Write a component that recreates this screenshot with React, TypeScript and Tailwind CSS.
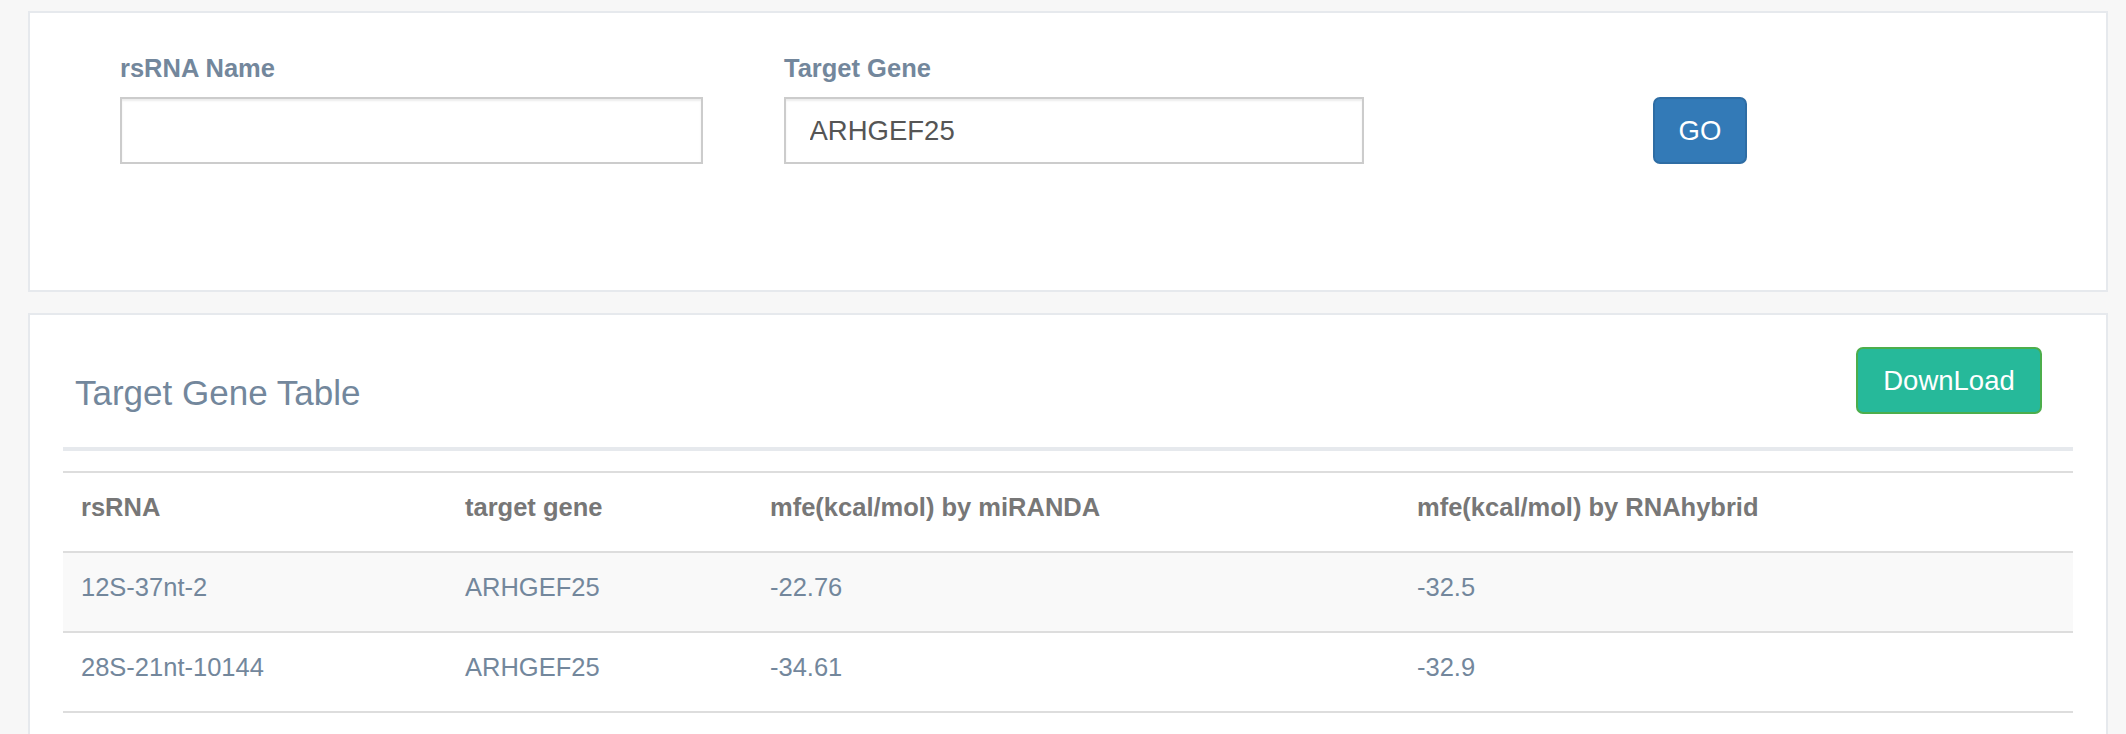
import React from "react";

const rows = [
  { rs: "12S-37nt-2", gene: "ARHGEF25", miranda: "-22.76", hybrid: "-32.5" },
  { rs: "28S-21nt-10144", gene: "ARHGEF25", miranda: "-34.61", hybrid: "-32.9" },
];

const font = { fontFamily: '"Liberation Sans", Arial, Helvetica, sans-serif' };

export default function App() {
  return (
    <div
      className="min-h-screen bg-[#f7f7f7] pt-[11px] pl-[28px] pb-[40px]"
      style={font}
    >
      {/* Search panel */}
      <div className="w-[2080px] h-[281px] border-2 border-[#e6e9ed] bg-white">
        <div className="flex items-end pl-[90px] pt-[37px]">
          <div className="flex flex-col w-[583px]">
            <label className="text-[25.5px] leading-[36px] font-bold text-[#73879c] mb-[11px]">
              rsRNA Name
            </label>
            <input
              className="h-[67px] w-full border-2 border-[#cccccc] px-[23.5px] text-[27.5px] text-[#555555] shadow-[inset_0_2px_2px_rgba(0,0,0,0.075)] outline-none"
              defaultValue=""
            />
          </div>
          <div className="flex flex-col w-[580px] ml-[81px]">
            <label className="text-[25.5px] leading-[36px] font-bold text-[#73879c] mb-[11px]">
              Target Gene
            </label>
            <input
              className="h-[67px] w-full border-2 border-[#cccccc] px-[23.5px] text-[27.5px] text-[#555555] shadow-[inset_0_2px_2px_rgba(0,0,0,0.075)] outline-none"
              defaultValue="ARHGEF25"
            />
          </div>
          <button className="ml-[289px] h-[67px] w-[94px] rounded-[7px] border-2 border-[#2e6da4] bg-[#337ab7] text-[27.5px] text-white">
            GO
          </button>
        </div>
      </div>

      {/* Table panel */}
      <div className="mt-[21px] w-[2080px] border-2 border-[#e6e9ed] bg-white px-[33px] pb-[60px]">
        <div className="flex h-[136px] items-start justify-between border-b-4 border-[#e6e9ed]">
          <h2 className="ml-[12px] mt-[58.6px] text-[35px] leading-[38.5px] font-normal text-[#73879c]">
            Target Gene Table
          </h2>
          <button className="mr-[31px] mt-[32px] h-[67px] w-[186px] rounded-[7px] border-2 border-[#4cae4c] bg-[#26b99a] text-[27.5px] text-white">
            DownLoad
          </button>
        </div>

        <div className="mt-[20px] border-t-2 border-[#dddddd]">
          <div className="grid grid-cols-[386px_305px_647px_1fr] border-b-2 border-[#dddddd] text-[25.5px] font-bold text-[#777777]">
            <div className="pl-[18px] pt-[16px] pb-[25px] leading-[37px]">rsRNA</div>
            <div className="pl-[16px] pt-[16px] pb-[25px] leading-[37px]">target gene</div>
            <div className="pl-[16px] pt-[16px] pb-[25px] leading-[37px]">mfe(kcal/mol) by miRANDA</div>
            <div className="pl-[16px] pt-[16px] pb-[25px] leading-[37px]">mfe(kcal/mol) by RNAhybrid</div>
          </div>
          {rows.map((r, i) => (
            <div
              key={r.rs}
              className={`grid grid-cols-[386px_305px_647px_1fr] border-b-2 border-[#dddddd] text-[25.5px] text-[#73879c] ${
                i % 2 === 0 ? "bg-[#f9f9f9]" : "bg-white"
              }`}
            >
              <div className="pl-[18px] pt-[16px] pb-[25px] leading-[37px]">{r.rs}</div>
              <div className="pl-[16px] pt-[16px] pb-[25px] leading-[37px]">{r.gene}</div>
              <div className="pl-[16px] pt-[16px] pb-[25px] leading-[37px]">{r.miranda}</div>
              <div className="pl-[16px] pt-[16px] pb-[25px] leading-[37px]">{r.hybrid}</div>
            </div>
          ))}
        </div>
      </div>
    </div>
  );
}
